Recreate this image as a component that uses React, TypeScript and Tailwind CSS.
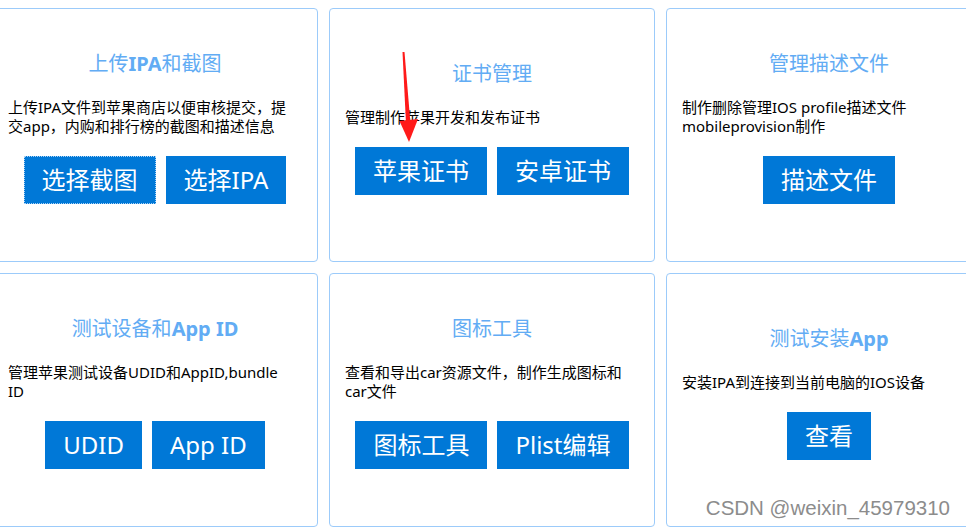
import React from "react";

type Card = {
  title: React.ReactNode;
  desc: string;
  buttons: string[];
};

const cards: Card[] = [
  {
    title: (
      <>
        上传<b className="font-bold">IPA</b>和截图
      </>
    ),
    desc: "上传IPA文件到苹果商店以便审核提交，提交app，内购和排行榜的截图和描述信息",
    buttons: ["选择截图", "选择IPA"],
  },
  {
    title: "证书管理",
    desc: "管理制作苹果开发和发布证书",
    buttons: ["苹果证书", "安卓证书"],
  },
  {
    title: "管理描述文件",
    desc: "制作删除管理IOS profile描述文件mobileprovision制作",
    buttons: ["描述文件"],
  },
  {
    title: (
      <>
        测试设备和<b className="font-bold">App ID</b>
      </>
    ),
    desc: "管理苹果测试设备UDID和AppID,bundle ID",
    buttons: ["UDID", "App ID"],
  },
  {
    title: "图标工具",
    desc: "查看和导出car资源文件，制作生成图标和car文件",
    buttons: ["图标工具", "Plist编辑"],
  },
  {
    title: (
      <>
        测试安装<b className="font-bold">App</b>
      </>
    ),
    desc: "安装IPA到连接到当前电脑的IOS设备",
    buttons: ["查看"],
  },
];

export default function App() {
  return (
    <div
      className="relative w-[966px] h-[530px] overflow-hidden bg-white"
      style={{ fontFamily: '"Noto Sans", "Noto Sans CJK SC", sans-serif' }}
    >
      <div className="ml-[-8px] mt-[8px] grid grid-cols-[326px_326px_326px] grid-rows-[254px_254px] gap-[11px]">
        {cards.map((c, i) => (
          <div
            key={i}
            className="flex flex-col items-center justify-center rounded-[4px] border border-[#9ccbfa] px-[15px] pb-[16px]"
          >
            <h2 className="text-[20px] leading-[28px] text-[#62acf4] font-normal">{c.title}</h2>
            <p className="mt-[20px] w-full pr-[7px] text-[15px] leading-[19px] text-black">{c.desc}</p>
            <div className="mt-[20px] flex gap-[10px]">
              {c.buttons.map((b, j) => (
                <button
                  key={b}
                  className={`h-[48px] px-[18px] bg-[#0078d7] text-white text-[24px] leading-[48px] ${
                    i === 0 && j === 0 ? "outline outline-1 outline-dotted outline-[#a9d2f7] -outline-offset-1" : ""
                  }`}
                >
                  {b}
                </button>
              ))}
            </div>
          </div>
        ))}
      </div>

      {/* red annotation arrow */}
      <svg className="absolute left-[396px] top-[48px]" width="26" height="98" viewBox="0 0 26 98">
        <polygon points="6.5,4 8.5,4 14.5,76 10,76" fill="#ff1a1a" />
        <polygon points="3.5,73 22,71 13,94" fill="#ff1a1a" />
      </svg>

      <div
        className="absolute right-[16px] bottom-[6px] text-[20.5px] text-[#8c8c8c] [text-shadow:0_0_2px_#fff]"
        style={{ fontFamily: '"Liberation Sans", Arial, sans-serif' }}
      >
        CSDN @weixin_45979310
      </div>
    </div>
  );
}
